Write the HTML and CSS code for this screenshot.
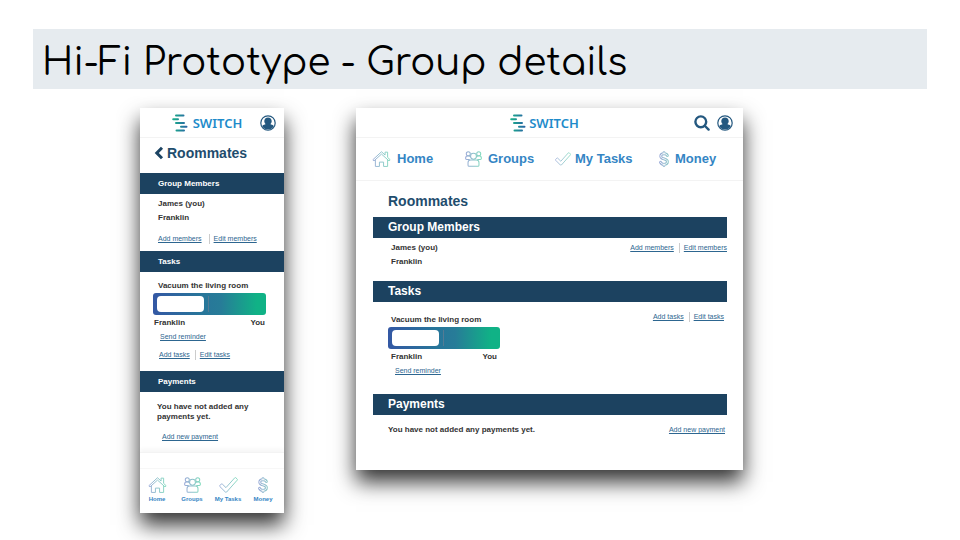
FILE: index.html
```
<!DOCTYPE html>
<html lang="en">
<head>
  <meta charset="utf-8">
  <meta name="viewport" content="width=device-width, initial-scale=1.0">
  <title>Hi-Fi Prototype - Group details</title>
  <link rel="stylesheet" href="styles.css">
</head>
<body>
  <!-- Shared icons -->
  <svg class="sprite" width="0" height="0" aria-hidden="true">
    <defs>
      <linearGradient id="line" gradientUnits="userSpaceOnUse" x1="0" y1="0" x2="20" y2="0">
        <stop offset="0" stop-color="#9aa8d8"/>
        <stop offset="1" stop-color="#80dcbc"/>
      </linearGradient>
      <linearGradient id="mark" gradientUnits="userSpaceOnUse" x1="0" y1="0" x2="16" y2="0">
        <stop offset="0" stop-color="#18b487"/>
        <stop offset="1" stop-color="#2a5fa8"/>
      </linearGradient>
    </defs>
    <symbol id="icon-logo" viewBox="0 0 16 18">
      <g fill="none" stroke="url(#mark)" stroke-width="2" stroke-linecap="round">
        <path d="M4 1.500h7.500M1.200 5.200h4.800M4 9h8M9 12.700h5.500M4.500 16.500h7.500"/>
      </g>
    </symbol>
    <symbol id="icon-user" viewBox="0 0 16 16">
      <circle cx="8" cy="8" r="7.2" fill="#fff" stroke="#24587f" stroke-width="1.2"/>
      <path fill="#24587f" d="M8 2.4c2.300 0 3.700 1.500 3.700 3.600 0 1.300-.5 2.400-1.300 3.100.3.700 2.900.700 3.500 2.100A6.300 6.300 0 0 1 8 14.300a6.300 6.300 0 0 1-5.900-3.100c.6-1.400 3.200-1.400 3.500-2.100-.8-.7-1.300-1.800-1.300-3.100 0-2.100 1.400-3.600 3.700-3.600z"/>
    </symbol>
    <symbol id="icon-search" viewBox="0 0 16 16">
      <g fill="none" stroke="#24587f" stroke-width="2.400" stroke-linecap="round">
        <circle cx="6.800" cy="6.800" r="5.400"/>
        <path d="M11 11l3.600 3.600"/>
      </g>
    </symbol>
    <symbol id="icon-back" viewBox="0 0 10 14">
      <path d="M8 1.800L2.800 7 8 12.200" fill="none" stroke="#1c4463" stroke-width="3"/>
    </symbol>
    <symbol id="icon-home" viewBox="0 0 20 17">
      <g fill="none" stroke="url(#line)" stroke-width="1" stroke-linejoin="round">
        <path d="M.8 9.300L10 .8l3.800 3.500V1.200h2.700v5.600l2.700 2.500-1.200 1.200L10 3.300 2 10.500z"/>
        <path d="M3.500 9.500v6.900h4.300v-4.600h4.400v4.600h4.300V9.500"/>
      </g>
    </symbol>
    <symbol id="icon-groups" viewBox="0 0 20 19">
      <g fill="none" stroke="url(#line)" stroke-width="1.200" stroke-linejoin="round">
        <circle cx="10" cy="6.300" r="3.500"/>
        <circle cx="3.800" cy="3.400" r="2.400"/>
        <circle cx="16.200" cy="3.400" r="2.400"/>
        <path d="M5.500 10H2A1.400 1.400 0 0 1 .6 8.600c0-1.800 1.200-2.900 3-2.900 1.300 0 2.200.6 2.800 1.500M14.500 10H18a1.400 1.400 0 0 0 1.400-1.400c0-1.800-1.200-2.900-3-2.900-1.300 0-2.200.6-2.800 1.500"/>
        <path d="M3.500 16.800v-3c0-2 1.200-3.200 3.200-3.200h6.600c2 0 3.200 1.200 3.200 3.200v3c0 .9-.5 1.400-1.400 1.400H4.900c-.9 0-1.400-.5-1.400-1.400z"/>
      </g>
    </symbol>
    <symbol id="icon-tasks" viewBox="0 0 20 17">
      <path d="M17.800.8l1.500 1.500c.3.300.3.700 0 1L8 16c-.4.400-.9.400-1.300 0L.8 10.100c-.3-.3-.3-.7 0-1L2.300 7.500c.3-.4.800-.4 1.100 0l3.900 3.800L16.700.8c.3-.3.800-.3 1.100 0z" fill="none" stroke="url(#line)" stroke-width="1"/>
    </symbol>
    <symbol id="icon-money" viewBox="0 0 12 19">
      <g fill="none" stroke-linecap="round">
        <path stroke="url(#line)" stroke-width="3.400" d="M10 5.300C9.500 3.800 8 3.200 6 3.200c-2.300 0-3.900 1-3.900 2.900 0 4.300 8 2.300 8 6.700 0 2-1.700 3.100-4.100 3.100-2.200 0-3.700-.9-4.200-2.500M6 1.800v1.400M6 15.900v1.400"/>
        <path stroke="#fff" stroke-width="1.200" d="M10 5.300C9.500 3.800 8 3.200 6 3.200c-2.300 0-3.900 1-3.900 2.900 0 4.300 8 2.300 8 6.700 0 2-1.700 3.100-4.100 3.100-2.200 0-3.700-.9-4.200-2.500M6 1.800v1.400M6 15.900v1.400"/>
      </g>
    </symbol>
  </svg>

  <header class="banner">
    <h1>Hi-Fi Prototype - Group details</h1>
  </header>

  <main class="screens">
    <!-- Phone -->
    <section class="screen mobile" aria-label="Mobile">
      <div class="topbar">
        <a class="brand" href="#"><svg class="brand-mark"><use href="#icon-logo"/></svg>SWITCH</a>
        <div class="actions">
          <button type="button" class="icon-button" aria-label="Account"><svg><use href="#icon-user"/></svg></button>
        </div>
      </div>
      <div class="page-title">
        <button type="button" class="back" aria-label="Back"><svg><use href="#icon-back"/></svg></button>
        <h2>Roommates</h2>
      </div>

      <h3 class="band">Group Members</h3>
      <div class="panel members">
        <ul>
          <li>James (you)</li>
          <li>Franklin</li>
        </ul>
        <div class="links">
          <a href="#">Add members</a>
          <a href="#">Edit members</a>
        </div>
      </div>

      <h3 class="band">Tasks</h3>
      <div class="panel tasks">
        <div class="task">
          <label for="turn-mobile">Vacuum the living room</label>
          <input type="checkbox" role="switch" class="turn" id="turn-mobile">
          <div class="who"><span>Franklin</span><span>You</span></div>
          <a class="remind" href="#">Send reminder</a>
        </div>
        <div class="links">
          <a href="#">Add tasks</a>
          <a href="#">Edit tasks</a>
        </div>
      </div>

      <h3 class="band">Payments</h3>
      <div class="panel payments">
        <p>You have not added any payments yet.</p>
        <div class="links"><a href="#">Add new payment</a></div>
      </div>

      <div class="footer">
        <nav class="tabbar">
          <a href="#"><svg class="home"><use href="#icon-home"/></svg>Home</a>
          <a href="#"><svg class="groups"><use href="#icon-groups"/></svg>Groups</a>
          <a href="#"><svg class="check"><use href="#icon-tasks"/></svg>My Tasks</a>
          <a href="#"><svg class="money"><use href="#icon-money"/></svg>Money</a>
        </nav>
      </div>
    </section>

    <!-- Desktop -->
    <section class="screen desktop" aria-label="Desktop">
      <div class="topbar">
        <a class="brand" href="#"><svg class="brand-mark"><use href="#icon-logo"/></svg>SWITCH</a>
        <div class="actions">
          <button type="button" class="icon-button" aria-label="Search"><svg><use href="#icon-search"/></svg></button>
          <button type="button" class="icon-button" aria-label="Account"><svg><use href="#icon-user"/></svg></button>
        </div>
      </div>
      <nav class="menu">
        <a href="#"><svg class="home"><use href="#icon-home"/></svg>Home</a>
        <a href="#"><svg class="groups"><use href="#icon-groups"/></svg>Groups</a>
        <a href="#"><svg class="check"><use href="#icon-tasks"/></svg>My Tasks</a>
        <a href="#"><svg class="money"><use href="#icon-money"/></svg>Money</a>
      </nav>
      <div class="content">
        <div class="page-title"><h2>Roommates</h2></div>

        <h3 class="band">Group Members</h3>
        <div class="panel members">
          <ul>
            <li>James (you)</li>
            <li>Franklin</li>
          </ul>
          <div class="links">
            <a href="#">Add members</a>
            <a href="#">Edit members</a>
          </div>
        </div>

        <h3 class="band">Tasks</h3>
        <div class="panel tasks">
          <div class="task">
            <label for="turn-desktop">Vacuum the living room</label>
            <input type="checkbox" role="switch" class="turn" id="turn-desktop">
            <div class="who"><span>Franklin</span><span>You</span></div>
            <a class="remind" href="#">Send reminder</a>
          </div>
          <div class="links">
            <a href="#">Add tasks</a>
            <a href="#">Edit tasks</a>
          </div>
        </div>

        <h3 class="band">Payments</h3>
        <div class="panel payments">
          <p>You have not added any payments yet.</p>
          <div class="links"><a href="#">Add new payment</a></div>
        </div>
      </div>
    </section>
  </main>
</body>
</html>
```
FILE: styles.css
```
* {
  box-sizing: border-box;
}
body {
  margin: 0;
  padding: 29px 33px 27px;
  background-color: #fff;
  color: #333;
  font-family: "Liberation Sans", Arial, sans-serif;
  font-size: 8px;
  line-height: 10px;
}
h1, h2, h3, p, ul {
  margin: 0;
  padding: 0;
}
ul {
  list-style: none;
}
svg {
  display: block;
}
.sprite {
  position: absolute;
}
button {
  padding: 0;
  border: 0;
  background: none;
  cursor: pointer;
}

.banner {
  background-color: #e6ebef;
  padding: 10px 9px 2px;
}
.banner h1 {
  color: #000;
  font-family: Comfortaa, Inter, sans-serif;
  font-size: 37px;
  font-weight: 400;
  line-height: 48px;
}

.screens {
  display: grid;
  grid-template-columns: 144fr 387fr;
  gap: 72px;
  align-items: start;
  padding: 19px 184px 0 107px;
}
.screen {
  background-color: #fff;
  box-shadow: 0 12px 20px rgba(0, 0, 0, 0.8);
}

/* Top bar */
.topbar {
  display: grid;
  grid-template-columns: 1fr auto 1fr;
  align-items: center;
  height: 30px;
  padding: 0 10px;
  border-bottom: 1px solid #f3f3f3;
}
.brand {
  grid-column: 2;
  display: flex;
  align-items: center;
  gap: 5px;
  margin-right: 10px;
  color: #1e8bca;
  font-family: "Noto Sans", sans-serif;
  font-size: 13px;
  font-weight: 600;
  line-height: 20px;
  text-decoration: none;
}
.brand-mark {
  width: 16px;
  height: 18px;
}
.desktop .brand {
  gap: 3px;
}
.actions {
  display: flex;
  justify-content: flex-end;
  gap: 7px;
}
.mobile .topbar {
  padding: 0 8px;
}
.icon-button svg {
  width: 16px;
  height: 16px;
}

/* Titles */
.page-title {
  display: flex;
  align-items: center;
  gap: 3px;
}
.page-title h2 {
  color: #1f4d6e;
  font-size: 14px;
  line-height: 16px;
}
.back svg {
  width: 10px;
  height: 14px;
}
.mobile .page-title {
  padding: 7px 14px 12px;
}
.desktop .page-title {
  padding: 12px 15px 8px;
}
.band {
  background-color: #1c4260;
  color: #fff;
  font-size: 8px;
  line-height: 21px;
  padding: 0 18px;
}
.desktop .band {
  font-size: 12px;
  padding: 0 15px;
}

/* Links */
.links {
  display: flex;
  font-size: 7px;
}
.links a,
.remind {
  color: #2d6690;
}
.links a + a {
  margin-left: 5px;
  padding-left: 4px;
  border-left: 1px solid #ccc;
}

/* Panels */
.panel {
  font-weight: bold;
}
.links,
.remind {
  font-weight: normal;
}
.members li {
  line-height: 14px;
}
.mobile .members {
  padding: 3px 18px 7px;
}
.mobile .members .links {
  margin-top: 9px;
}
.mobile .members a + a {
  margin-left: 7px;
}
.mobile .tasks {
  padding: 9px 18px 11px 13px;
}
.mobile .tasks .links {
  margin: 8px 6px 0;
}
.mobile .payments {
  padding: 10px 17px;
}
.mobile .payments .links {
  margin: 10px 5px 0;
}
.desktop .panel {
  display: flex;
  justify-content: space-between;
  align-items: flex-start;
}
.desktop .members {
  padding: 3px 0 12px 18px;
}
.desktop .members .links {
  margin-top: 2px;
}
.desktop .tasks {
  padding: 10px 3px 18px 15px;
}
.desktop .payments {
  padding: 10px 2px 35px 15px;
}

/* Task with the whose-turn switch */
.task {
  display: flex;
  flex-direction: column;
}
.desktop .task {
  flex-basis: 112px;
}
.mobile .task label {
  padding-left: 5px;
}
.desktop .task label {
  padding: 3px 0 0 3px;
}
.turn {
  appearance: none;
  display: flex;
  align-items: stretch;
  height: 22px;
  margin: 2px 0 3px;
  padding: 3px 4px;
  border-radius: 3px;
  background: linear-gradient(90deg, #3458a4, #28749a 40%, #277c98 60%, #10b286 92%);
  cursor: pointer;
}
.turn::before {
  content: "";
  width: 45%;
  border-radius: 4px;
  background-color: #fff;
}
.turn::after {
  content: "";
  width: 1px;
  margin-left: 4px;
  background-color: #547b94;
}
.turn:checked {
  flex-direction: row-reverse;
}
.who {
  display: flex;
  justify-content: space-between;
  padding: 0 1px;
}
.desktop .who {
  padding: 0 3px;
}
.remind {
  align-self: flex-start;
  margin: 4px 7px 0;
  font-size: 7px;
}

/* Navigation */
.menu,
.tabbar {
  display: grid;
}
.menu a,
.tabbar a {
  display: flex;
  align-items: center;
  color: #3485c4;
  font-weight: bold;
  text-decoration: none;
}
.menu {
  grid-template-columns: 93fr 90fr 104fr 84fr;
  height: 43px;
  padding-left: 16px;
  border-bottom: 1px solid #f3f3f3;
}
.menu a {
  gap: 6px;
  font-size: 13px;
  line-height: 16px;
}
.menu .check {
  width: 16px;
}
.menu a:nth-child(3) {
  gap: 4px;
}
.content {
  padding: 0 16px 0 17px;
}
.footer {
  padding-top: 15px;
  border-top: 1px solid #f3f3f3;
  box-shadow: 0 -3px 4px rgba(0, 0, 0, 0.04);
}
.tabbar {
  grid-template-columns: 34fr 36fr 36fr 34fr;
  padding: 8px 4px 9px 0;
  border-top: 1px solid #f7f7f7;
}
.tabbar a {
  flex-direction: column;
  gap: 1px;
  font-size: 6px;
  white-space: nowrap;
}
.home {
  width: 19px;
  height: 16px;
}
.groups {
  width: 17px;
  height: 16px;
}
.check {
  width: 19px;
  height: 16px;
}
.money {
  width: 10px;
  height: 16px;
}
```
